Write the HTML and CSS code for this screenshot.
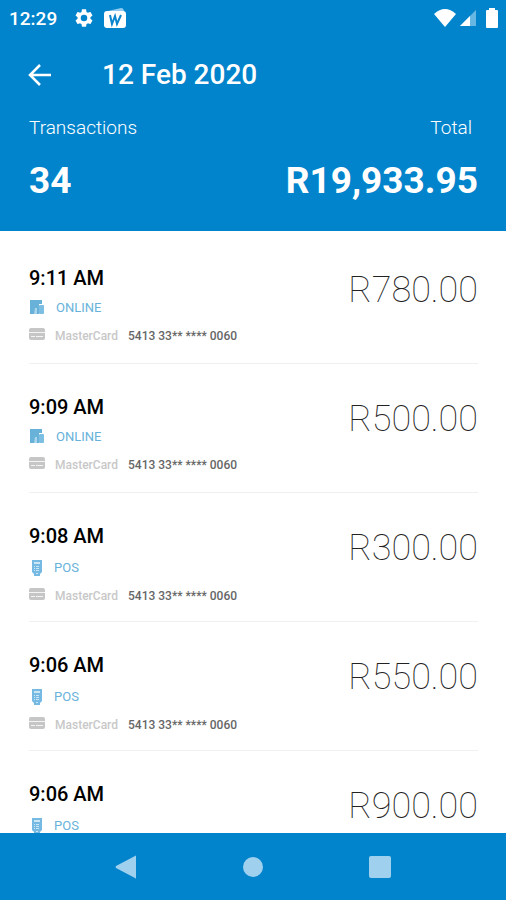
FILE: index.html
```html
<!DOCTYPE html>
<html lang="en">
<head>
<meta charset="utf-8">
<meta name="viewport" content="width=device-width, initial-scale=1">
<title>Transactions</title>
<link rel="stylesheet" href="styles.css">
</head>
<body>
<svg class="defs" aria-hidden="true">
  <symbol id="online" viewBox="0 0 16 16">
    <path fill="#68b2da" d="M1 0h12v4h-3v10H1z"/>
    <path fill="#a9d5ec" d="M6 8h2v6H5z"/>
    <rect x="10" y="5" width="5" height="9" rx="1" fill="#7dbfe2"/>
  </symbol>
  <symbol id="pos" viewBox="0 0 16 16">
    <path fill="#76b9e2" d="M3 0h10v12l-2 2v2H5v-2l-2-2z"/>
    <path fill="#cbe6f5" d="M5 2h6v2H5zM5 6h1v1H5zM7 6h3v1H7zM5 8h1v1H5zM7 8h3v1H7zM5 10h1v1H5zM7 10h3v1H7zM7 13h2v1H7z"/>
  </symbol>
  <symbol id="card" viewBox="0 0 16 16">
    <rect width="16" height="12" rx="2" fill="#c6c6c6"/>
    <path fill="#f4f4f4" d="M0 4h16v1H0zM2 8h4v1H2zM7 8h7v1H7z"/>
  </symbol>
</svg>
<div class="app">
  <header class="header">
    <div class="status">
      <span class="clock">12:29</span>
      <svg class="gear" viewBox="2 2 20 20"><path fill="#fff" fill-rule="evenodd" d="M19.140 12.940c.04-.3.060-.61.060-.94s-.02-.64-.07-.94l2.030-1.580c.18-.14.230-.41.120-.61l-1.920-3.320c-.12-.22-.37-.29-.59-.22l-2.390.960c-.5-.38-1.030-.7-1.620-.94L14.400 2.810c-.04-.24-.24-.41-.48-.41h-3.840c-.24 0-.43.170-.47.410L9.250 5.350c-.59.240-1.130.570-1.620.94L5.240 5.330c-.22-.08-.47 0-.59.220L2.740 8.870c-.12.210-.08.470.120.610l2.030 1.580c-.05.3-.09.630-.09.940s.02.640.070.940l-2.030 1.580c-.18.140-.23.410-.12.610l1.920 3.320c.12.220.370.290.590.220l2.390-.96c.5.380 1.030.7 1.620.940l.36 2.540c.05.240.240.410.480.410h3.840c.24 0 .44-.17.470-.41l.36-2.540c.59-.24 1.130-.56 1.620-.94l2.390.960c.22.080.470 0 .59-.22l1.920-3.320c.12-.22.070-.47-.12-.61zM12 15.600A3.600 3.600 0 1 1 12 8.400a3.600 3.600 0 0 1 0 7.200z"/></svg>
      <svg class="word" viewBox="0 0 22 20"><path fill="#8fcaf0" d="M4 3l13-3q3 0 3 4v2H4z"/><rect y="3" width="22" height="17" rx="3" fill="#fff"/><path d="M6 7l2 9 3-8 2 8 4-9" fill="none" stroke="#0a84cc" stroke-width="2"/></svg>
      <span class="spacer"></span>
      <svg class="wifi" viewBox="0 0 22 18"><path fill="#fff" d="M0 5Q11-5 22 5L11 18z"/></svg>
      <svg class="signal" viewBox="0 0 16 16"><path fill="#68b7e3" d="M0 16L16 0v16z"/><path fill="#fff" d="M0 16L10 6v10z"/></svg>
      <svg class="battery" viewBox="0 0 12 20"><path fill="#fff" d="M3 0h6v2h2q1 0 1 1v16q0 1-1 1H1q-1 0-1-1V3q0-1 1-1h2z"/></svg>
    </div>
    <div class="bar">
      <button class="back" type="button" aria-label="Back"><svg viewBox="0 0 24 24"><path d="M23 12H3M12 2L2 12l10 10" fill="none" stroke="#fff" stroke-width="2.500"/></svg></button>
      <h1>12 Feb 2020</h1>
    </div>
    <div class="labels"><span>Transactions</span><span class="total-label">Total</span></div>
    <div class="values"><span>34</span><span>R19,933.95</span></div>
  </header>
  <main class="list">
    <article class="row">
      <div><h2>9:11 AM</h2>
        <p class="tag online"><svg class="icon"><use href="#online"/></svg>ONLINE</p>
        <p class="card"><svg class="icon"><use href="#card"/></svg><span class="brand">MasterCard</span><span>5413 33** **** 0060</span></p></div>
      <span class="amount">R780.00</span>
    </article>
    <article class="row">
      <div><h2>9:09 AM</h2>
        <p class="tag online"><svg class="icon"><use href="#online"/></svg>ONLINE</p>
        <p class="card"><svg class="icon"><use href="#card"/></svg><span class="brand">MasterCard</span><span>5413 33** **** 0060</span></p></div>
      <span class="amount">R500.00</span>
    </article>
    <article class="row">
      <div><h2>9:08 AM</h2>
        <p class="tag pos"><svg class="icon"><use href="#pos"/></svg>POS</p>
        <p class="card"><svg class="icon"><use href="#card"/></svg><span class="brand">MasterCard</span><span>5413 33** **** 0060</span></p></div>
      <span class="amount">R300.00</span>
    </article>
    <article class="row">
      <div><h2>9:06 AM</h2>
        <p class="tag pos"><svg class="icon"><use href="#pos"/></svg>POS</p>
        <p class="card"><svg class="icon"><use href="#card"/></svg><span class="brand">MasterCard</span><span>5413 33** **** 0060</span></p></div>
      <span class="amount">R550.00</span>
    </article>
    <article class="row">
      <div><h2>9:06 AM</h2>
        <p class="tag pos"><svg class="icon"><use href="#pos"/></svg>POS</p></div>
      <span class="amount">R900.00</span>
    </article>
  </main>
  <nav class="nav">
    <button type="button" aria-label="Back"><svg viewBox="0 0 24 24"><path fill="#9fd0ee" d="M22 1v22q0 1-1 0L2 13q-1-1 0-2L21 1q1-1 1 0z"/></svg></button>
    <button type="button" aria-label="Home"><svg viewBox="0 0 24 24"><circle cx="12" cy="12" r="10" fill="#9fd0ee"/></svg></button>
    <button type="button" aria-label="Recent apps"><svg viewBox="0 0 24 24"><rect x="1" y="1" width="22" height="22" rx="2" fill="#9fd0ee"/></svg></button>
  </nav>
</div>
</body>
</html>
```
FILE: styles.css
```css
* { box-sizing: border-box; }
body { margin: 0; background: #fff; color: #000; font-family: Roboto, "Liberation Sans", sans-serif; }
h1, h2, p { margin: 0; }
button { padding: 0; border: 0; background: none; }
svg { display: block; flex: none; }
.defs { position: absolute; width: 0; height: 0; }
.app { display: flex; flex-direction: column; height: 100vh; }

.header { flex: none; padding-bottom: 28px; background: #0284cc; color: #fff; }
.status { display: flex; align-items: center; height: 36px; padding: 0 8px 0 9px; }
.clock { font-size: 19px; font-weight: 500; }
.gear { width: 18px; height: 18px; margin-left: 18px; }
.word { width: 22px; height: 20px; margin-left: 11px; }
.spacer { flex: 1; }
.wifi { width: 22px; height: 18px; }
.signal { width: 16px; height: 16px; margin-left: 4px; }
.battery { width: 12px; height: 20px; margin-left: 10px; }
.bar { display: flex; align-items: center; height: 77px; padding-left: 28px; }
.back svg { width: 24px; height: 24px; }
h1 { margin-left: 50px; font-size: 28px; font-weight: 500; }
.labels, .values { display: flex; justify-content: space-between; padding: 0 28px 0 29px; }
.labels { font-size: 19px; font-weight: 300; line-height: 30px; }
.total-label { margin-right: 6px; }
.values { margin-top: 16px; font-size: 37px; font-weight: 700; line-height: 44px; }

.list { flex: 1; min-height: 0; padding: 4px 28px 0 29px; overflow: hidden; }
.row { display: flex; justify-content: space-between; height: 129px; padding-top: 29px; border-bottom: 1px solid #f0f0f0; }
h2 { font-size: 20px; font-weight: 500; line-height: 28px; }
.tag, .card { display: flex; align-items: center; }
.tag { margin-top: 4px; color: #68b2da; font-size: 13px; line-height: 24px; }
.online { gap: 11px; }
.pos { gap: 9px; margin-top: 6px; }
.card { gap: 10px; margin-top: 4px; color: #666; font-size: 12px; font-weight: 500; line-height: 24px; }
.icon { width: 16px; height: 16px; }
.brand { color: #c8c8c8; }
.amount { color: #222; font-size: 36px; font-weight: 100; line-height: 52px; }

.nav { display: flex; flex: none; align-items: center; justify-content: center; gap: 103px; height: 67px; background: #0284cc; }
.nav svg { width: 24px; height: 24px; }
```
